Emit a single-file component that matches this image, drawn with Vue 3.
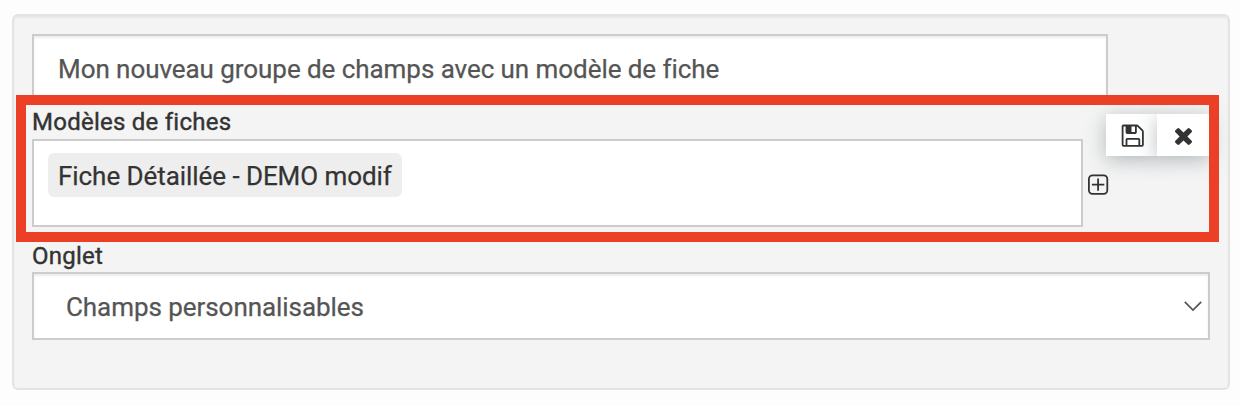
<script setup>
import { ref } from 'vue'

const title = ref('Mon nouveau groupe de champs avec un modèle de fiche')
const tags = ref(['Fiche Détaillée - DEMO modif'])
const tab = ref('Champs personnalisables')
</script>

<template>
  <main class="page">
    <section class="panel">
      <div class="field title-field"><span class="title-text">{{ title }}</span></div>

      <div class="label models-label"><span>Modèles de fiches</span></div>
      <div class="models-row">
        <div class="field tags-field">
          <span v-for="tag in tags" :key="tag" class="tag">{{ tag }}</span>
        </div>
        <svg class="add" width="21" height="22" viewBox="0 0 21 22" fill="none" stroke="#333" stroke-width="1.8">
          <rect x=".9" y="1.4" width="18.4" height="18.4" rx="3.6" />
          <path d="M10.1 4.4v12.4M3.9 10.6h12.4" />
        </svg>
      </div>

      <div class="label tab-label"><span>Onglet</span></div>
      <div class="field select-field">
        <span class="tab-text">{{ tab }}</span>
        <svg width="18" height="12" viewBox="0 0 18 12" fill="none" stroke="#555" stroke-width="1.7">
          <path d="M.8 1.8 9 10l8.2-8.2" />
        </svg>
      </div>

      <div class="actions">
        <button class="action" aria-label="Enregistrer">
          <svg width="24" height="24" viewBox="0 0 24 24" fill="none" stroke="#333" stroke-width="1.8">
            <path d="M3.4 2.5H16.6Q17.4 2.5 18 3.1L22.3 7.4Q22.9 8 22.9 8.8V21.8Q22.9 22.8 21.9 22.8H3.6Q2.6 22.8 2.6 21.8V3.3Q2.6 2.5 3.4 2.5Z" />
            <path d="M6.5 22.8V16.5Q6.5 15.8 7.2 15.8H18.6Q19.3 15.8 19.3 16.5V22.8M15.9 2.8V9.2Q15.9 10 15.1 10H7.3Q6.5 10 6.5 9.2V2.8" />
            <path d="M6.2 3h5.3v7H6.2z" fill="#333" stroke="none" />
          </svg>
        </button>
        <button class="action" aria-label="Fermer">
          <svg class="cross" width="17" height="17" viewBox="110 366 1188 1188" fill="#333">
            <path d="M1298 1322q0 40-28 68l-136 136q-28 28-68 28t-68-28l-294-294-294 294q-28 28-68 28t-68-28l-136-136q-28-28-28-68t28-68l294-294-294-294q-28-28-28-68t28-68l136-136q28-28 68-28t68 28l294 294 294-294q28-28 68-28t68 28l136 136q28 28 28 68t-28 68l-294 294 294 294q28 28 28 68z" />
          </svg>
        </button>
      </div>
      <div class="highlight"></div>
    </section>
  </main>
</template>

<style>
body {
  margin: 0;
  background: #fdfdfd;
}
</style>

<style scoped>
.page {
  box-sizing: border-box;
  height: 406px;
  padding: 14px 10px 0 12px;
  font-family: Roboto, "Liberation Sans", sans-serif;
  color: #333;
  overflow: hidden;
}
.panel {
  position: relative;
  box-sizing: border-box;
  height: 376px;
  padding: 18px;
  border: 2px solid #e3e3e3;
  border-radius: 6px;
  background: #f4f4f4;
  box-shadow: inset 0 2px 2px rgba(0, 0, 0, .05);
}
.field {
  box-sizing: border-box;
  display: flex;
  border: 2px solid #ccc;
  background: #fff;
  font-size: 26px;
  letter-spacing: -.06px;
  white-space: nowrap;
  -webkit-text-stroke: .25px currentColor;
}
.title-field {
  width: 1076px;
  height: 68px;
  align-items: center;
  padding: 2px 0 0 24px;
  color: #555;
  box-shadow: inset 0 2px 2px rgba(0, 0, 0, .075);
}
.label {
  box-sizing: border-box;
  display: flex;
  align-items: center;
  font-size: 24px;
  line-height: 28px;
  letter-spacing: .25px;
  -webkit-text-stroke: .4px #333;
}
.models-label {
  height: 37px;
  padding-top: 2px;
}
.models-row {
  display: flex;
  align-items: center;
  gap: 5px;
}
.tags-field {
  width: 1051px;
  height: 88px;
  align-items: flex-start;
  padding: 12px 14px;
}
.tag {
  box-sizing: border-box;
  height: 44px;
  padding: 0 10px;
  border-radius: 6px;
  background: #eee;
  line-height: 46px;
}
.add {
  margin-top: 4px;
}
.tab-label {
  height: 45px;
  padding-top: 12px;
}
.select-field {
  width: 1178px;
  height: 68px;
  align-items: center;
  justify-content: space-between;
  padding: 0 6px 0 32px;
  color: #555;
  box-shadow: inset 0 2px 2px rgba(0, 0, 0, .075);
}
.tab-text {
  padding-top: 2px;
}
.actions {
  position: absolute;
  top: 98px;
  left: 1092px;
  display: flex;
}
.action {
  display: flex;
  align-items: center;
  justify-content: center;
  width: 51px;
  height: 42px;
  padding: 0;
  border: 0;
  background: #fff;
  box-shadow: 0 4px 20px rgba(55, 71, 79, .35);
}
.action + .action {
  width: 53px;
}
.cross {
  margin-top: 3px;
}
.highlight {
  position: absolute;
  box-sizing: border-box;
  left: 2px;
  top: 79px;
  width: 1203px;
  height: 147px;
  border: 10px solid #eb4026;
}
</style>
